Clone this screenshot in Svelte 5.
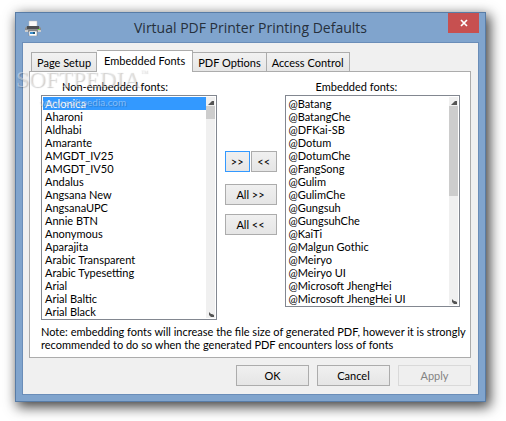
<script lang="ts">
  const tabs = ['Page Setup', 'Embedded Fonts', 'PDF Options', 'Access Control'];
  let activeTab = $state('Embedded Fonts');

  let available = $state([
    'Aclonica', 'Aharoni', 'Aldhabi', 'Amarante', 'AMGDT_IV25', 'AMGDT_IV50',
    'Andalus', 'Angsana New', 'AngsanaUPC', 'Annie BTN', 'Anonymous', 'Aparajita',
    'Arabic Transparent', 'Arabic Typesetting', 'Arial', 'Arial Baltic', 'Arial Black'
  ]);
  let embedded = $state([
    '@Batang', '@BatangChe', '@DFKai-SB', '@Dotum', '@DotumChe', '@FangSong',
    '@Gulim', '@GulimChe', '@Gungsuh', '@GungsuhChe', '@KaiTi', '@Malgun Gothic',
    '@Meiryo', '@Meiryo UI', '@Microsoft JhengHei', '@Microsoft JhengHei UI'
  ]);
  let pickedAvailable: string[] = $state(['Aclonica']);
  let pickedEmbedded: string[] = $state([]);

  function embed(names: string[]) {
    embedded = [...embedded, ...names];
    available = available.filter((name) => !names.includes(name));
    pickedAvailable = [];
  }

  function remove(names: string[]) {
    available = [...available, ...names];
    embedded = embedded.filter((name) => !names.includes(name));
    pickedEmbedded = [];
  }
</script>

{#snippet scrollbar(kind: string)}
  <div class="scrollbar" aria-hidden="true">
    <svg class="arrow" viewBox="0 0 9 9"><path d="M2 8L6 4H8V8Z" fill="#555" /></svg>
    <div class="thumb {kind}"></div>
    <svg class="arrow down" viewBox="0 0 9 9"><path d="M3 3L5 5H6L8 6V8H5L3 6Z" fill="#555" /></svg>
  </div>
{/snippet}

<div class="desktop">
  <div class="window">
    <header class="titlebar">
      <svg class="printer" viewBox="0 0 16 16" aria-hidden="true">
        <path d="M4 1H12V7H4Z" fill="#fafafa" stroke="#bbb" stroke-width="0.5" />
        <path d="M2 6H14L16 8V12H0V8Z" fill="#8b8d90" />
        <path d="M2 6H14V9H2Z" fill="#4d4f52" />
        <path d="M0 10H3V12H0ZM13 10H16V12H13Z" fill="#c9cbcd" />
        <path d="M4 11H12V16H4Z" fill="#fff" stroke="#777" stroke-width="0.5" />
        <path d="M5 12H8V14H5Z" fill="#3b8fd0" />
        <path d="M8 12H10V14H8Z" fill="#215a7c" />
        <path d="M13 9H15V10H13Z" fill="#6be04b" />
      </svg>
      <h1>Virtual PDF Printer Printing Defaults</h1>
      <button class="close" aria-label="Close">
        <svg viewBox="0 0 8 8"><path d="M1 1L7 7M7 1L1 7" stroke="#fff" stroke-width="1.7" /></svg>
      </button>
    </header>

    <main class="client">
      <div class="tabs" role="tablist">
        {#each tabs as tab}
          <button
            class="tab"
            class:active={activeTab === tab}
            role="tab"
            aria-selected={activeTab === tab}
            onclick={() => (activeTab = tab)}
          >{tab}</button>
        {/each}
      </div>

      <section class="panel" role="tabpanel">
        <div class="columns">
          <div class="column">
            <label for="available">Non-embedded fonts:</label>
            <div class="listbox">
              <select id="available" multiple size="17" bind:value={pickedAvailable}>
                {#each available as name}
                  <option value={name}>{name}</option>
                {/each}
              </select>
              {@render scrollbar('short')}
            </div>
          </div>

          <div class="transfer">
            <div class="pair">
              <button class="button default" onclick={() => embed(pickedAvailable)}>&gt;&gt;</button>
              <button class="button" onclick={() => remove(pickedEmbedded)}>&lt;&lt;</button>
            </div>
            <button class="button first-all" onclick={() => embed(available)}>All &gt;&gt;</button>
            <button class="button" onclick={() => remove(embedded)}>All &lt;&lt;</button>
          </div>

          <div class="column right">
            <label for="embedded">Embedded fonts:</label>
            <div class="listbox">
              <select id="embedded" multiple size="16" bind:value={pickedEmbedded}>
                {#each embedded as name}
                  <option value={name}>{name}</option>
                {/each}
              </select>
              {@render scrollbar('long')}
            </div>
          </div>
        </div>

        <p class="note">
          Note: embedding fonts will increase the file size of generated PDF, however it is strongly
          recommended to do so when the generated PDF encounters loss of fonts
        </p>
      </section>

      <footer class="actions">
        <button class="button">OK</button>
        <button class="button">Cancel</button>
        <button class="button" disabled>Apply</button>
      </footer>
    </main>
  </div>

  <div class="watermark" aria-hidden="true">
    <div class="brand">SOFTPEDIA<sup>™</sup></div>
    <div class="site">www.softpedia.com</div>
  </div>
</div>

<style>
  :global(body) {
    margin: 0;
    background: #fff;
  }

  .desktop {
    position: relative;
    padding: 12px 20px 19px 15px;
    font-family: Lato, 'Liberation Sans', Arial, sans-serif;
    font-size: 11px;
    line-height: 13px;
    color: #000;
  }

  .desktop * {
    box-sizing: border-box;
  }

  button,
  select {
    margin: 0;
    font: inherit;
    color: inherit;
  }

  .window {
    padding: 0 6px 6px;
    background: #80a4cd;
    border: 1px solid #587ca6;
    box-shadow: 3px 4px 12px 1px rgba(0, 0, 0, 0.75);
  }

  .titlebar {
    display: flex;
    align-items: center;
    height: 29px;
    padding-left: 3px;
  }

  .printer {
    width: 16px;
    height: 16px;
  }

  h1 {
    flex: 1;
    margin: 0;
    padding-left: 12px;
    font-family: 'Open Sans', 'Noto Sans', sans-serif;
    font-size: 14px;
    font-weight: 400;
    line-height: 20px;
    text-align: center;
    white-space: nowrap;
    color: #26303c;
  }

  .close {
    display: flex;
    align-items: center;
    justify-content: center;
    align-self: flex-start;
    width: 31px;
    height: 20px;
    padding: 0;
    background: #c75050;
    border: 0;
  }

  .close svg {
    width: 8px;
    height: 8px;
  }

  .client {
    padding: 7px 7px 8px 6px;
    background: #f0f0f0;
    border: 1px solid #6a8db8;
  }

  .tabs {
    display: flex;
    align-items: flex-end;
    padding-left: 2px;
  }

  .tab {
    height: 19px;
    padding: 0 5px;
    background: linear-gradient(#f2f2f2, #e6e6e6);
    border: 1px solid #acacac;
    border-bottom: 0;
    white-space: nowrap;
  }

  .tab + .tab {
    border-left: 0;
  }

  .tab.active {
    position: relative;
    height: 22px;
    margin-bottom: -1px;
    padding: 0 7px 2px;
    background: #fff;
  }

  .panel {
    padding: 7px 0 6px 11px;
    background: #fff;
    border: 1px solid #acacac;
  }

  .columns {
    display: flex;
    align-items: flex-start;
    gap: 8px;
    padding-right: 10px;
  }

  .column {
    flex: 1;
    min-width: 0;
  }

  label {
    display: block;
    padding: 1px 0 2px 21px;
  }

  .right label {
    padding-left: 31px;
  }

  .listbox {
    display: flex;
    padding: 1px;
    border: 1px solid #828790;
  }

  select {
    flex: 1;
    min-width: 0;
    padding: 0;
    background: #fff;
    border: 0;
    border-radius: 0;
    outline: 0;
    overflow: hidden;
    scrollbar-width: none;
  }

  option {
    min-height: 13px;
    height: 13px;
    padding: 0 2px;
    line-height: 13px;
  }

  option:checked {
    background: #3399ff linear-gradient(#3399ff, #3399ff);
    -webkit-text-fill-color: #fff;
  }

  .scrollbar {
    display: flex;
    flex-direction: column;
    width: 9px;
    background: #f0f0f0;
  }

  .arrow {
    width: 9px;
    height: 9px;
  }

  .down {
    margin-top: auto;
  }

  .thumb {
    background: #cdcdcd;
  }

  .short {
    height: 13px;
  }

  .long {
    height: 90px;
  }

  .transfer {
    display: flex;
    flex-direction: column;
    gap: 9px;
    width: 52px;
    padding-top: 72px;
  }

  .pair {
    display: flex;
    gap: 1px;
  }

  .pair .button {
    flex: 1;
  }

  .first-all {
    margin-top: 3px;
  }

  .button {
    height: 21px;
    padding: 0;
    background: linear-gradient(#f0f0f0, #e5e5e5);
    border: 1px solid #acacac;
  }

  .button.default {
    border-color: #3399ff;
  }

  .button:disabled {
    color: #838383;
    background: #efefef;
    border-color: #d9d9d9;
  }

  .note {
    margin: 5px 0 0;
  }

  .actions {
    display: flex;
    justify-content: flex-end;
    gap: 8px;
    padding-top: 7px;
  }

  .actions .button {
    width: 73px;
  }

  .watermark {
    position: absolute;
    top: 69px;
    left: 16px;
    color: rgba(255, 255, 255, 0.4);
    text-shadow: 1px 1px 1px rgba(0, 0, 0, 0.2);
    pointer-events: none;
  }

  .brand {
    font-family: 'Liberation Serif', serif;
    font-size: 23px;
    line-height: 22px;
  }

  .brand sup {
    font-size: 8px;
    line-height: 8px;
    vertical-align: top;
  }

  .site {
    padding: 5px 0 0 23px;
    font-size: 10px;
    line-height: 13px;
  }
</style>
